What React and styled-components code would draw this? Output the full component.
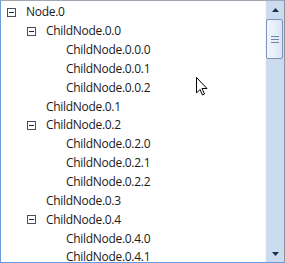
import React from 'react';
import styled, { createGlobalStyle } from 'styled-components';

const GlobalStyle = createGlobalStyle`
  html, body { margin: 0; padding: 0; background: #ffffff; }
  body { font-family: "Segoe UI", "Open Sans", "Noto Sans", sans-serif; }
`;

const TreeFrame = styled.div`
  position: relative;
  width: 285px;
  height: 263px;
  box-sizing: border-box;
  border-style: solid;
  border-width: 1px;
  border-color: #a0a7b2 #8d939c #6d9ad8 #6d9ad8;
  display: flex;
  background: #ffffff;
  overflow: hidden;
`;

const TreeBody = styled.div`
  flex: 1;
  padding: 2px 0 0 0;
  overflow: hidden;
`;

const Row = styled.div`
  height: 18.85px;
  display: flex;
  align-items: center;
  padding-left: ${p => 6 + p.level * 20}px;
  font-size: 12px;
  color: #1a1a1a;
  white-space: nowrap;
`;

const ExpanderSlot = styled.div`
  width: 19px;
  height: 10px;
  flex-shrink: 0;
  display: flex;
  align-items: center;
`;

const Expander = styled.div`
  width: 9px;
  height: 9px;
  box-sizing: border-box;
  border: 1px solid #434f63;
  display: flex;
  align-items: center;
  justify-content: center;
  &::after {
    content: '';
    width: 5px;
    height: 1px;
    background: #1c2840;
  }
`;

const Label = styled.span`
  line-height: 16px;
  letter-spacing: -0.3px;
`;

const ScrollBar = styled.div`
  width: 18px;
  display: flex;
  flex-direction: column;
  background: #cbdbf0;
  border-left: 1px solid #f4f7fb;
`;

const ArrowButton = styled.div`
  height: 17px;
  display: flex;
  align-items: center;
  justify-content: center;
`;

const Thumb = styled.div`
  margin: 1px 1px 0 0;
  height: 40px;
  box-sizing: border-box;
  border: 1px solid #7f93b8;
  border-radius: 2px;
  background: linear-gradient(to right, #f1f5fc 0%, #e6eefa 55%, #d8e4f4 100%);
  display: flex;
  flex-direction: column;
  align-items: center;
  justify-content: center;
  gap: 2px;
`;

const Grip = styled.div`
  width: 8px;
  height: 1px;
  background: #7084a6;
`;

const Track = styled.div`
  flex: 1;
`;

const Cursor = styled.svg`
  position: absolute;
  left: 195px;
  top: 76px;
`;

const rows = [
  { level: 0, text: 'Node.0', open: true },
  { level: 1, text: 'ChildNode.0.0', open: true },
  { level: 2, text: 'ChildNode.0.0.0' },
  { level: 2, text: 'ChildNode.0.0.1' },
  { level: 2, text: 'ChildNode.0.0.2' },
  { level: 1, text: 'ChildNode.0.1' },
  { level: 1, text: 'ChildNode.0.2', open: true },
  { level: 2, text: 'ChildNode.0.2.0' },
  { level: 2, text: 'ChildNode.0.2.1' },
  { level: 2, text: 'ChildNode.0.2.2' },
  { level: 1, text: 'ChildNode.0.3' },
  { level: 1, text: 'ChildNode.0.4', open: true },
  { level: 2, text: 'ChildNode.0.4.0' },
  { level: 2, text: 'ChildNode.0.4.1' },
];

const App = () => (
  <>
    <GlobalStyle />
    <TreeFrame>
      <TreeBody>
        {rows.map((row, i) => (
          <Row key={i} level={row.level}>
            <ExpanderSlot>{row.open && <Expander />}</ExpanderSlot>
            <Label>{row.text}</Label>
          </Row>
        ))}
      </TreeBody>
      <ScrollBar>
        <ArrowButton>
          <svg width="7" height="4" viewBox="0 0 7 4"><path d="M3.5 0 L7 4 L0 4 Z" fill="#1f2f4a" /></svg>
        </ArrowButton>
        <Thumb>
          <Grip /><Grip /><Grip />
        </Thumb>
        <Track />
        <ArrowButton>
          <svg width="7" height="4" viewBox="0 0 7 4"><path d="M0 0 L7 0 L3.5 4 Z" fill="#1f2f4a" /></svg>
        </ArrowButton>
      </ScrollBar>
      <Cursor width="12" height="19" viewBox="0 0 12 19">
        <path d="M0.5 0.5 L0.5 16 L4 12.5 L6.5 18 L8.5 17 L6 11.5 L11 11.5 Z" fill="#ffffff" stroke="#000000" strokeWidth="1" strokeLinejoin="round" />
      </Cursor>
    </TreeFrame>
  </>
);

export default App;
